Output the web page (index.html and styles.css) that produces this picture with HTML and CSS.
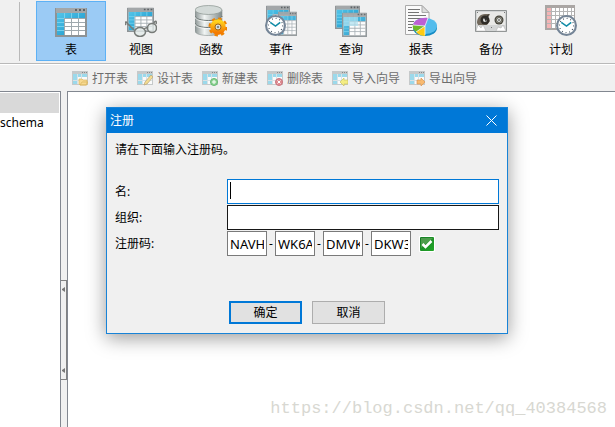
FILE: index.html
```html
<!DOCTYPE html>
<html lang="zh-CN">

<head>
  <meta charset="UTF-8">
  <meta name="viewport" content="width=device-width, initial-scale=1.0">
  <title>注册</title>
  <link rel="stylesheet" href="styles.css">
</head>

<body>
  <!-- 图标定义 -->
  <svg class="sprite" aria-hidden="true">
    <defs>
      <linearGradient id="blue" x1="0" y1="0" x2="1" y2="1">
        <stop offset="0" stop-color="#54c4e8" />
        <stop offset="1" stop-color="#1593c8" />
      </linearGradient>
      <linearGradient id="metal" x1="0" y1="0" x2="1" y2="0">
        <stop offset="0" stop-color="#8b9494" />
        <stop offset=".35" stop-color="#f1f5f4" />
        <stop offset="1" stop-color="#7f8a89" />
      </linearGradient>
      <linearGradient id="orange" x1="0" y1="0" x2="0" y2="1">
        <stop offset="0" stop-color="#ffd21c" />
        <stop offset="1" stop-color="#f47a00" />
      </linearGradient>
      <linearGradient id="green" x1="0" y1="0" x2="1" y2="1">
        <stop offset="0" stop-color="#167a25" />
        <stop offset="1" stop-color="#22a828" />
      </linearGradient>
      <symbol id="grid" viewBox="0 0 32 30" preserveAspectRatio="none">
        <path fill="#8d9396" d="M0 1h32v29H0z" />
        <path fill="#a3a7a9" d="M1 1h30v5H1z" />
        <path fill="#5d6265" d="M20 2h2v2h-2zM24 2h2v2h-2zM28 2h2v2h-2z" />
        <path fill="#fff" d="M2 6h28v22H2z" />
        <path fill="url(#blue)" d="M2 6h28v5H9v17H2z" />
        <path fill="none" stroke="#9fa9ae" d="M9.500 11v17M16.500 11v17M23.500 11v17M9 11.500h21M9 15.500h21M9 19.500h21M9 23.500h21" />
        <path fill="none" stroke="#75d1ed" d="M2 11.500h7M2 15.500h7M2 19.500h7M2 23.500h7M9.500 6v5M16.500 6v5M23.500 6v5" />
      </symbol>
      <symbol id="clock" viewBox="0 0 20 20">
        <circle cx="10" cy="10" r="9" fill="#fff" stroke="#758597" stroke-width="2" />
        <circle cx="10" cy="10" r="6.800" fill="none" stroke="#354556" stroke-width="1.200" stroke-dasharray=".8 2.760" />
        <path fill="none" stroke="#128ca7" stroke-width="1.500" d="M5 7l5 3.500L14.500 7" />
      </symbol>
      <symbol id="table" viewBox="0 0 32 32">
        <use href="#grid" y="2" width="32" height="30" />
      </symbol>
      <symbol id="view" viewBox="0 0 32 32">
        <use href="#grid" x="2" y="2" width="27" height="25" />
        <path fill="none" stroke="#777b78" stroke-width="1.500" d="M1 20c-2-3 0-4 1-2l7 7M31 19c1-3-1-4-2-1l-1 3" />
        <ellipse cx="15" cy="27" rx="5.500" ry="4.500" fill="#e4ebea" fill-opacity=".8" stroke="#777b78" stroke-width="1.500" />
        <ellipse cx="27" cy="23" rx="4.500" ry="4.500" fill="#e4ebea" fill-opacity=".8" stroke="#777b78" stroke-width="1.500" />
        <path fill="none" stroke="#777b78" stroke-width="1.500" d="M19 24q2-2 4-1" />
      </symbol>
      <symbol id="func" viewBox="0 0 32 32">
        <path fill="url(#metal)" stroke="#899290" stroke-width=".6" d="M0 5v21c0 6 27 6 27 0V5z" />
        <ellipse cx="13.500" cy="5" rx="13.500" ry="4.500" fill="#d3dad8" stroke="#89938f" stroke-width=".7" />
        <path fill="none" stroke="#697371" d="M0 11c0 6 27 6 27 0M0 18c0 6 27 6 27 0" />
        <path fill="none" stroke="#fff" stroke-opacity=".7" d="M0 12c0 6 27 6 27 0M0 19c0 6 27 6 27 0" />
        <circle cx="23" cy="22" r="8" fill="none" stroke="#ef8200" stroke-width="3" stroke-dasharray="3.200 3.080" />
        <circle cx="23" cy="22" r="5.500" fill="#9ca8a8" stroke="url(#orange)" stroke-width="4.500" />
        <circle cx="23" cy="22" r="3" fill="#d5dcdb" stroke="#a76608" />
        <circle cx="23" cy="22" r="1" fill="#607477" />
      </symbol>
      <symbol id="event" viewBox="0 0 32 32">
        <use href="#grid" x="1" y="0" width="24" height="25" />
        <use href="#grid" x="13" y="6" width="19" height="25" opacity=".9" />
        <use href="#clock" x="0" y="10" width="21" height="21" />
      </symbol>
      <symbol id="query" viewBox="0 0 32 32">
        <use href="#grid" x="0" y="0" width="25" height="24" />
        <use href="#grid" x="7" y="7" width="25" height="25" opacity=".92" />
        <path fill="#ade0ef" fill-opacity=".7" d="M9 12h14v9H9z" />
      </symbol>
      <symbol id="report" viewBox="0 0 32 32">
        <path fill="#fafafa" stroke="#aaa" d="M.500.500H17l7 7v22H.500z" />
        <path fill="#ddd" stroke="#aaa" d="M17 .500v7h7z" />
        <path stroke="#747474" d="M3 4.500h12M3 7.500h11M3 10.500h18M3 13.500h16M3 16.500h6M3 19.500h5M3 22.500h4M3 25.500h6" />
        <ellipse cx="20" cy="23" rx="12" ry="8" fill="#168cc4" />
        <ellipse cx="20" cy="21" rx="12" ry="8" fill="#53bcec" />
        <path fill="#bd5fd4" d="M20 21L8 20c1-5 8-8 15-7z" />
        <path fill="#6fb92a" d="M20 21L8 20c-1 3 1 5 3 7z" />
        <path fill="#ffcb13" d="M20 21l-9 6c3 3 6 4 9 4z" />
        <path fill="none" stroke="#fff" stroke-width=".7" d="M8 20l12 1 3-8M11 27l9-6v9" />
      </symbol>
      <symbol id="backup" viewBox="0 0 32 32">
        <path fill="#d3d5d5" stroke="#8d9191" d="M.500 5.500h31v21H.500z" />
        <path fill="#e9e9e7" d="M2 7h28v13H2z" />
        <path fill="#72695c" d="M2 18c0-5 3-9 8-9h5l-2 4 2 3-3 4H3z" />
        <circle cx="10" cy="15" r="4.500" fill="#2f2c27" />
        <circle cx="10" cy="15" r="2" fill="#e1e4e2" />
        <circle cx="24" cy="15" r="4.500" fill="#45443b" />
        <circle cx="24" cy="15" r="3" fill="none" stroke="#9b9a8f" stroke-width=".7" />
        <circle cx="24" cy="15" r="2" fill="#e9ece9" />
        <path fill="#302f2c" d="M9 13l5-4-3 8zM23.500 14h1v2h-1z" />
        <path fill="#fff" stroke="#aaa" stroke-width=".5" d="M1 26l2-6 3 3 2-3 3 6zM21 26l2-4 3 1 2-3 3 6z" />
        <path fill="#777" d="M2 7h1v1H2zM29 7h1v1h-1zM16 22h1v1h-1z" />
      </symbol>
      <symbol id="schedule" viewBox="0 0 32 32">
        <path fill="#aaa6a4" d="M0 0h30v25H0z" />
        <path fill="#fff" d="M2 3h27v20H2z" />
        <path fill="#f4b4b5" d="M2 3h4v20H2z" />
        <path stroke="#b5b5b5" d="M6.500 3v20M10.500 3v20M14.500 3v20M18.500 3v20M22.500 3v20M26.500 3v20M2 6.500h27M2 10.500h27M2 14.500h27M2 18.500h27" />
        <use href="#clock" x="11" y="10" width="21" height="21" />
      </symbol>
      <symbol id="small-grid" viewBox="0 0 16 15">
        <path fill="#c5c9ca" d="M0 0h16v14H0z" />
        <path fill="#fafafa" d="M1 3h14v10H1z" />
        <path fill="#9bd9eb" d="M1 3h14v3H5v7H1z" />
        <path stroke="#d8e2e6" d="M5.500 3v10M9.500 3v10M1 9.500h14" />
        <path fill="#888" d="M10 1h1v1h-1zM12 1h1v1h-1zM14 1h1v1h-1z" />
      </symbol>
    </defs>
  </svg>

  <header class="toolbar">
    <button class="tool active" type="button"><svg><use href="#table" /></svg><span>表</span></button>
    <button class="tool" type="button"><svg><use href="#view" /></svg><span>视图</span></button>
    <button class="tool" type="button"><svg><use href="#func" /></svg><span>函数</span></button>
    <button class="tool" type="button"><svg><use href="#event" /></svg><span>事件</span></button>
    <button class="tool" type="button"><svg><use href="#query" /></svg><span>查询</span></button>
    <button class="tool" type="button"><svg><use href="#report" /></svg><span>报表</span></button>
    <button class="tool" type="button"><svg><use href="#backup" /></svg><span>备份</span></button>
    <button class="tool" type="button"><svg><use href="#schedule" /></svg><span>计划</span></button>
  </header>

  <nav class="actions">
    <button class="action" type="button" disabled>
      <svg viewBox="0 0 16 15"><use href="#small-grid" /><path fill="#f7d990" stroke="#d9b45e" stroke-width=".7" d="M7 13V8h3l1 1h4v5H8zM8 14l2-3h6l-2 3z" /></svg>
      <span>打开表</span>
    </button>
    <button class="action" type="button" disabled>
      <svg viewBox="0 0 16 15"><use href="#small-grid" /><path fill="#f3dc91" stroke="#b7a477" stroke-width=".7" d="M7 14l1-3 6-7 2 2-6 7z" /></svg>
      <span>设计表</span>
    </button>
    <button class="action" type="button" disabled>
      <svg viewBox="0 0 16 15"><use href="#small-grid" /><circle cx="12" cy="11" r="3.500" fill="#8fd394" stroke="#67b974" /><path stroke="#fff" d="M10 11h4M12 9v4" /></svg>
      <span>新建表</span>
    </button>
    <button class="action" type="button" disabled>
      <svg viewBox="0 0 16 15"><use href="#small-grid" /><circle cx="12" cy="11" r="3.500" fill="#df8c91" stroke="#c9747d" /><path stroke="#fff" d="M10.500 9.500l3 3M13.500 9.500l-3 3" /></svg>
      <span>删除表</span>
    </button>
    <button class="action" type="button" disabled>
      <svg viewBox="0 0 16 15"><use href="#small-grid" /><path fill="#f4ed83" stroke="#c9c265" stroke-width=".7" d="M8 11l4-4v2h4v4h-4v2z" /></svg>
      <span>导入向导</span>
    </button>
    <button class="action" type="button" disabled>
      <svg viewBox="0 0 16 15"><use href="#small-grid" /><path fill="#f8ba70" stroke="#d99554" stroke-width=".7" d="M16 11l-4-4v2H8v4h4v2z" /></svg>
      <span>导出向导</span>
    </button>
  </nav>

  <main class="workspace">
    <aside class="sidebar">
      <div class="tree-item selected"></div>
      <div class="tree-item">schema</div>
    </aside>
    <div class="splitter">
      <button class="grip" type="button" aria-label="折叠">
        <svg viewBox="0 0 3 5"><path d="M3 0v5L0 3V2z" /></svg>
        <svg viewBox="0 0 3 5"><path d="M3 0v5L0 3V2z" /></svg>
      </button>
    </div>
    <section class="content">
      <p class="watermark">https://blog.csdn.net/qq_40384568</p>
    </section>
  </main>

  <div class="dialog" role="dialog" aria-labelledby="dialog-title">
    <div class="dialog-title">
      <span id="dialog-title">注册</span>
      <button class="close" type="button" aria-label="关闭">
        <svg viewBox="0 0 11 11"><path d="M.500.500l10 10M10.500.500l-10 10" /></svg>
      </button>
    </div>
    <form class="dialog-body">
      <p class="message">请在下面输入注册码。</p>
      <div class="fields">
        <label for="name">名:</label>
        <div class="field focused"><input id="name" type="text"></div>
        <label for="org">组织:</label>
        <div class="field"><input id="org" type="text"></div>
        <label for="code">注册码:</label>
        <div class="codes">
          <input id="code" type="text" value="NAVH">
          <span>-</span>
          <input type="text" value="WK6A" aria-label="注册码 2">
          <span>-</span>
          <input type="text" value="DMVK" aria-label="注册码 3">
          <span>-</span>
          <input type="text" value="DKW3" aria-label="注册码 4">
          <svg class="valid" viewBox="0 0 16 16">
            <rect width="16" height="16" rx="1" fill="#fff" />
            <rect x="1" y="1" width="14" height="14" rx="1" fill="url(#green)" />
            <path fill="#6fac65" fill-opacity=".6" d="M2 2h12L2 12z" />
            <path fill="none" stroke="#fff" stroke-width="2.500" d="M3.500 8l3 3 6-6" />
          </svg>
        </div>
      </div>
      <div class="buttons">
        <button class="btn primary" type="submit">确定</button>
        <button class="btn" type="button">取消</button>
      </div>
    </form>
  </div>
</body>

</html>
```
FILE: styles.css
```css
* {
  box-sizing: border-box;
  margin: 0;
  padding: 0;
}

body {
  height: 100vh;
  display: flex;
  flex-direction: column;
  overflow: hidden;
  background-color: #f0f0f0;
  color: #000;
  font: 12px/16px "Noto Sans", "Noto Sans CJK SC", sans-serif;
}

button,
input {
  font: inherit;
  color: inherit;
}

button {
  border: none;
  background: none;
}

.sprite {
  position: absolute;
  width: 0;
  height: 0;
}

/* 主工具栏 */
.toolbar {
  display: flex;
  flex: none;
  height: 64px;
  padding: 1px 0 2px 19px;
  border-bottom: 1px solid #b9b9b9;
}

.toolbar::before {
  content: "";
  width: 1px;
  margin: 1px 16px 0 0;
  background-color: #b9b9b9;
}

.tool {
  flex: none;
  display: flex;
  flex-direction: column;
  align-items: center;
  gap: 5px;
  width: 70px;
  height: 60px;
  padding-top: 3px;
  border: 1px solid transparent;
}

.tool.active {
  background-color: #9bcbf5;
  border-color: #5db1f5;
}

.tool svg {
  width: 32px;
  height: 32px;
}

/* 表操作栏 */
.actions {
  display: flex;
  flex: none;
  align-items: center;
  gap: 9px;
  height: 27px;
  padding: 1px 0 0 72px;
  border-top: 1px solid #fff;
}

.action {
  flex: none;
  display: flex;
  align-items: center;
  gap: 4px;
  color: #6d6d6d;
}

.action svg {
  width: 16px;
  height: 15px;
}

.workspace {
  flex: 1;
  display: flex;
  min-height: 0;
}

.sidebar {
  flex: none;
  width: 61px;
  padding-top: 1px;
  background-color: #fff;
  border: solid #828790;
  border-width: 1px 1px 0 0;
}

.tree-item {
  height: 20px;
  margin-right: 1px;
  line-height: 20px;
}

.tree-item.selected {
  background-color: #d9d9d9;
}

.splitter {
  flex: none;
  display: flex;
  width: 6px;
  padding-top: 189px;
}

.grip {
  display: flex;
  flex-direction: column;
  justify-content: space-between;
  align-items: center;
  width: 6px;
  height: 100px;
  padding: 6px 0;
  border: solid #828282;
  border-width: 1px 1px 1px 0;
}

.grip svg {
  width: 3px;
  height: 5px;
  fill: #777;
}

.content {
  flex: 1;
  display: flex;
  justify-content: flex-end;
  align-items: flex-end;
  padding: 0 8px 6px 0;
  background-color: #fff;
  border: solid #828790;
  border-width: 1px 0 0 1px;
}

.watermark {
  color: #d8d8d2;
  font: 17px/24px "Liberation Mono", monospace;
}

/* 注册对话框 */
.dialog {
  position: absolute;
  top: 107px;
  left: 0;
  right: 1px;
  width: 402px;
  margin: 0 auto;
  background-color: #f0f0f0;
  border: 1px solid #1883d7;
  box-shadow: 0 4px 18px rgba(0, 0, 0, 0.4);
}

.dialog-title {
  display: flex;
  justify-content: space-between;
  align-items: center;
  height: 25px;
  padding: 0 10px 0 3px;
  background-color: #0078d7;
  color: #fff;
}

.close {
  display: flex;
}

.close svg {
  width: 11px;
  height: 11px;
  fill: none;
  stroke: #fff;
}

.dialog-body {
  padding: 9px 8px;
}

.message {
  margin-bottom: 21px;
}

.fields {
  display: grid;
  grid-template-columns: 112px 1fr;
  row-gap: 1px;
  align-items: center;
}

.fields input {
  height: 25px;
  padding: 0 2px;
  background-color: #fff;
  border: 1px solid #7a7a7a;
  outline: none;
}

.field {
  position: relative;
  display: flex;
}

.field input {
  width: 100%;
  border-color: #171717;
}

.field.focused input {
  border-color: #0078d7;
}

/* 输入光标 */
.field.focused::after {
  content: "";
  position: absolute;
  top: 3px;
  left: 3px;
  width: 1px;
  height: 17px;
  background-color: #000;
}

.codes {
  display: flex;
  align-items: center;
}

.codes input {
  width: 40px;
  font-size: 13px;
}

.codes span {
  width: 8px;
  text-align: center;
}

.valid {
  width: 16px;
  height: 16px;
  margin-left: 8px;
}

.buttons {
  display: flex;
  justify-content: center;
  gap: 10px;
  margin-top: 45px;
}

.btn {
  width: 73px;
  height: 23px;
  background-color: #e1e1e1;
  border: 1px solid #adadad;
}

.btn.primary {
  border: 2px solid #0078d7;
}
```
